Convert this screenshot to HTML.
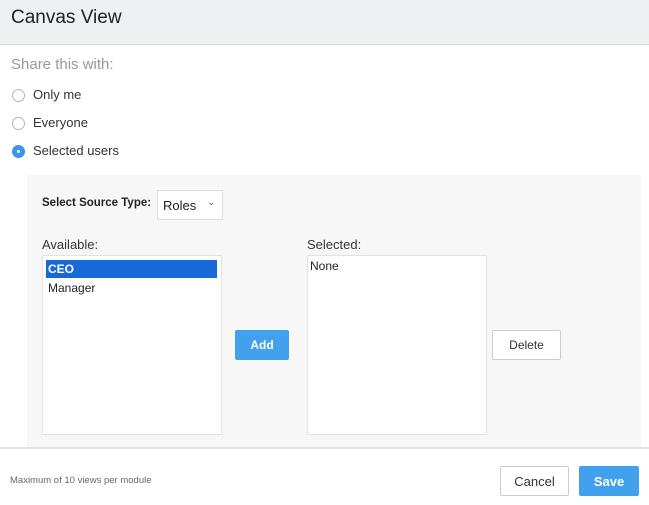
<!DOCTYPE html>
<html><head><style>
*{margin:0;padding:0;box-sizing:border-box}
body{width:649px;height:505px;position:relative;background:#fff;font-family:"Liberation Sans",Arial,sans-serif;color:#222;overflow:hidden}
.a{position:absolute}
.radio{position:absolute;width:13px;height:13px;border-radius:50%;border:1px solid #b5b5b5;background:#fff}
.lbl{position:absolute;font-size:13px;color:#333}
.btn{position:absolute;font-size:13px;display:flex;align-items:center;justify-content:center;border-radius:2px}
</style></head><body>
<div class="a" style="left:0;top:0;width:649px;height:45px;background:#eef0f2;border-bottom:1px solid #d8dadc"></div>
<div class="a" style="left:11px;top:7px;font-size:19px;color:#222">Canvas View</div>
<div class="a" style="left:11px;top:56px;font-size:15px;color:#999">Share this with:</div>
<div class="radio" style="left:12px;top:89px"></div><div class="lbl" style="left:33px;top:87px">Only me</div>
<div class="radio" style="left:12px;top:117px"></div><div class="lbl" style="left:33px;top:115px">Everyone</div>
<div class="radio" style="left:12px;top:145px;background:#3b95e8;border-color:#3b95e8"><div class="a" style="left:4px;top:4px;width:3px;height:3px;border-radius:50%;background:#fff"></div></div><div class="lbl" style="left:33px;top:143px">Selected users</div>
<div class="a" style="left:27px;top:175px;width:614px;height:273px;background:#f7f7f7"></div>
<div class="a" style="left:42px;top:197px;font-size:11.5px;font-weight:bold;color:#222">Select Source Type:</div>
<div class="a" style="left:157px;top:190px;width:66px;height:30px;background:#fff;border:1px solid #ddd;font-size:13px;padding:7px 0 0 5px">Roles<span style="position:absolute;left:49px;top:6px;font-size:10px;color:#666">⌄</span></div>
<div class="a" style="left:42px;top:237px;font-size:13px;color:#333">Available:</div>
<div class="a" style="left:42px;top:255px;width:180px;height:180px;background:#fff;border:1px solid #dde3ea"></div>
<div class="a" style="left:46px;top:260px;width:171px;height:18px;background:#1769d8;color:#fff;font-size:12px;font-weight:bold;padding:2px 0 0 2px">CEO</div>
<div class="a" style="left:48px;top:281px;font-size:12px;color:#222">Manager</div>
<div class="a" style="left:307px;top:237px;font-size:13px;color:#333">Selected:</div>
<div class="a" style="left:307px;top:255px;width:180px;height:180px;background:#fff;border:1px solid #dde3ea"></div>
<div class="a" style="left:310px;top:259px;font-size:12px;color:#222">None</div>
<div class="btn" style="left:235px;top:330px;width:54px;height:30px;background:#42a1ec;color:#fff;font-weight:bold;font-size:12px">Add</div>
<div class="btn" style="left:492px;top:330px;width:69px;height:30px;background:#fff;border:1px solid #ccc;color:#333;font-size:12px">Delete</div>
<div class="a" style="left:0;top:447px;width:649px;height:2px;background:#e3e3e3"></div>
<div class="a" style="left:10px;top:475px;font-size:9.5px;color:#666">Maximum of 10 views per module</div>
<div class="btn" style="left:500px;top:466px;width:69px;height:30px;background:#fff;border:1px solid #ccc;color:#333">Cancel</div>
<div class="btn" style="left:579px;top:466px;width:60px;height:30px;background:#42a1ec;color:#fff;font-weight:bold">Save</div>
</body></html>
